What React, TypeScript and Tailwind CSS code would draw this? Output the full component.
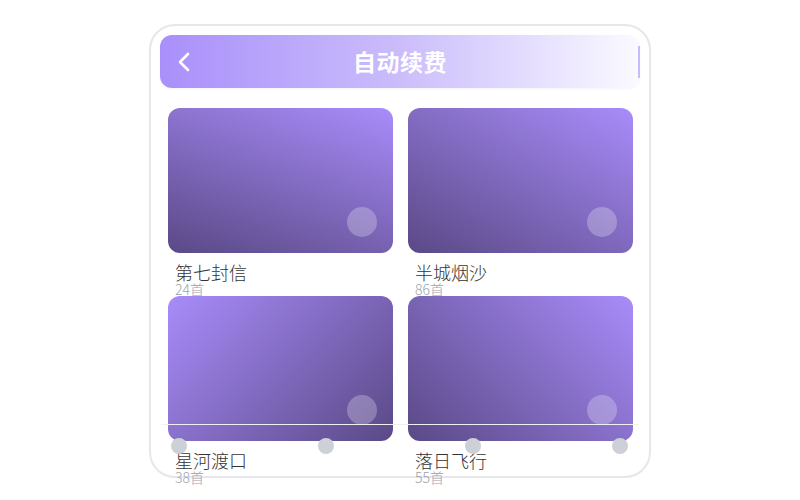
const albums = [
    {name: "第七封信", count: 24, grad: "bg-linear-[200deg]"},
    {name: "半城烟沙", count: 86, grad: "bg-linear-[210deg]"},
    {name: "星河渡口", count: 38, grad: "bg-linear-[135deg]"},
    {name: "落日飞行", count: 55, grad: "bg-linear-[225deg]"},
];

function BackIcon() {
    return (
        <svg width="14" height="20" viewBox="0 0 14 20" fill="none">
            <path d="M11 2 L3 10 L11 18" stroke="white" strokeWidth="2.6" strokeLinecap="round" strokeLinejoin="round" />
        </svg>
    );
}

export default function App() {
    return (
        <div className="w-[800px] h-[500px] bg-white pt-[24px] font-['Noto_Sans_CJK_SC','Noto_Sans',sans-serif]">
            <main className="relative mx-auto w-[502px] h-[454px] rounded-[26px] border-2 border-[#e6e7eb] px-[9px] pt-[9px]">
                <header className="flex items-center h-[53px] rounded-[12px] bg-linear-to-r from-[#a98ffa] via-[#cbbdfb] to-[#fbfaff] shadow-[0_1px_2px_rgba(120,100,200,0.08)]">
                    <button className="w-[60px] pl-[17px] flex items-center"><BackIcon /></button>
                    <h1 className="flex-1 text-center text-white text-[23px] font-bold tracking-[0.5px]">自动续费</h1>
                    <div className="w-[60px] flex justify-end"><span className="w-[2px] h-[32px] bg-[#c9bafc]" /></div>
                </header>
                <section className="grid grid-cols-2 gap-x-[15px] pl-[8px] pr-[7px] mt-[20px]">
                    {albums.map((a) => (
                        <div key={a.name} className="h-[188px]">
                            <div className={`relative h-[145px] rounded-[12px] ${a.grad} from-[#a88cfa] to-[#5a4986]`}>
                                <span className="absolute right-[16px] bottom-[16px] w-[30px] h-[30px] rounded-full bg-white/25" />
                            </div>
                            <p className="mt-[8px] pl-[7px] text-[18px] leading-[22px] font-light text-[#333333]">{a.name}</p>
                            <p className="-mt-[2px] pl-[7px] text-[14px] leading-[16px] font-light text-[#9ca3af]">{a.count}首</p>
                        </div>
                    ))}
                </section>
                <div className="absolute left-[10px] right-[11px] top-[398px]">
                    <div className="h-px bg-[#eef0f3]" />
                    <div className="flex justify-between px-[10px] mt-[13px]">
                        {[0, 1, 2, 3].map((i) => (
                            <span key={i} className="w-[16px] h-[16px] rounded-full bg-[#cdd1d7]" />
                        ))}
                    </div>
                </div>
            </main>
        </div>
    );
}
